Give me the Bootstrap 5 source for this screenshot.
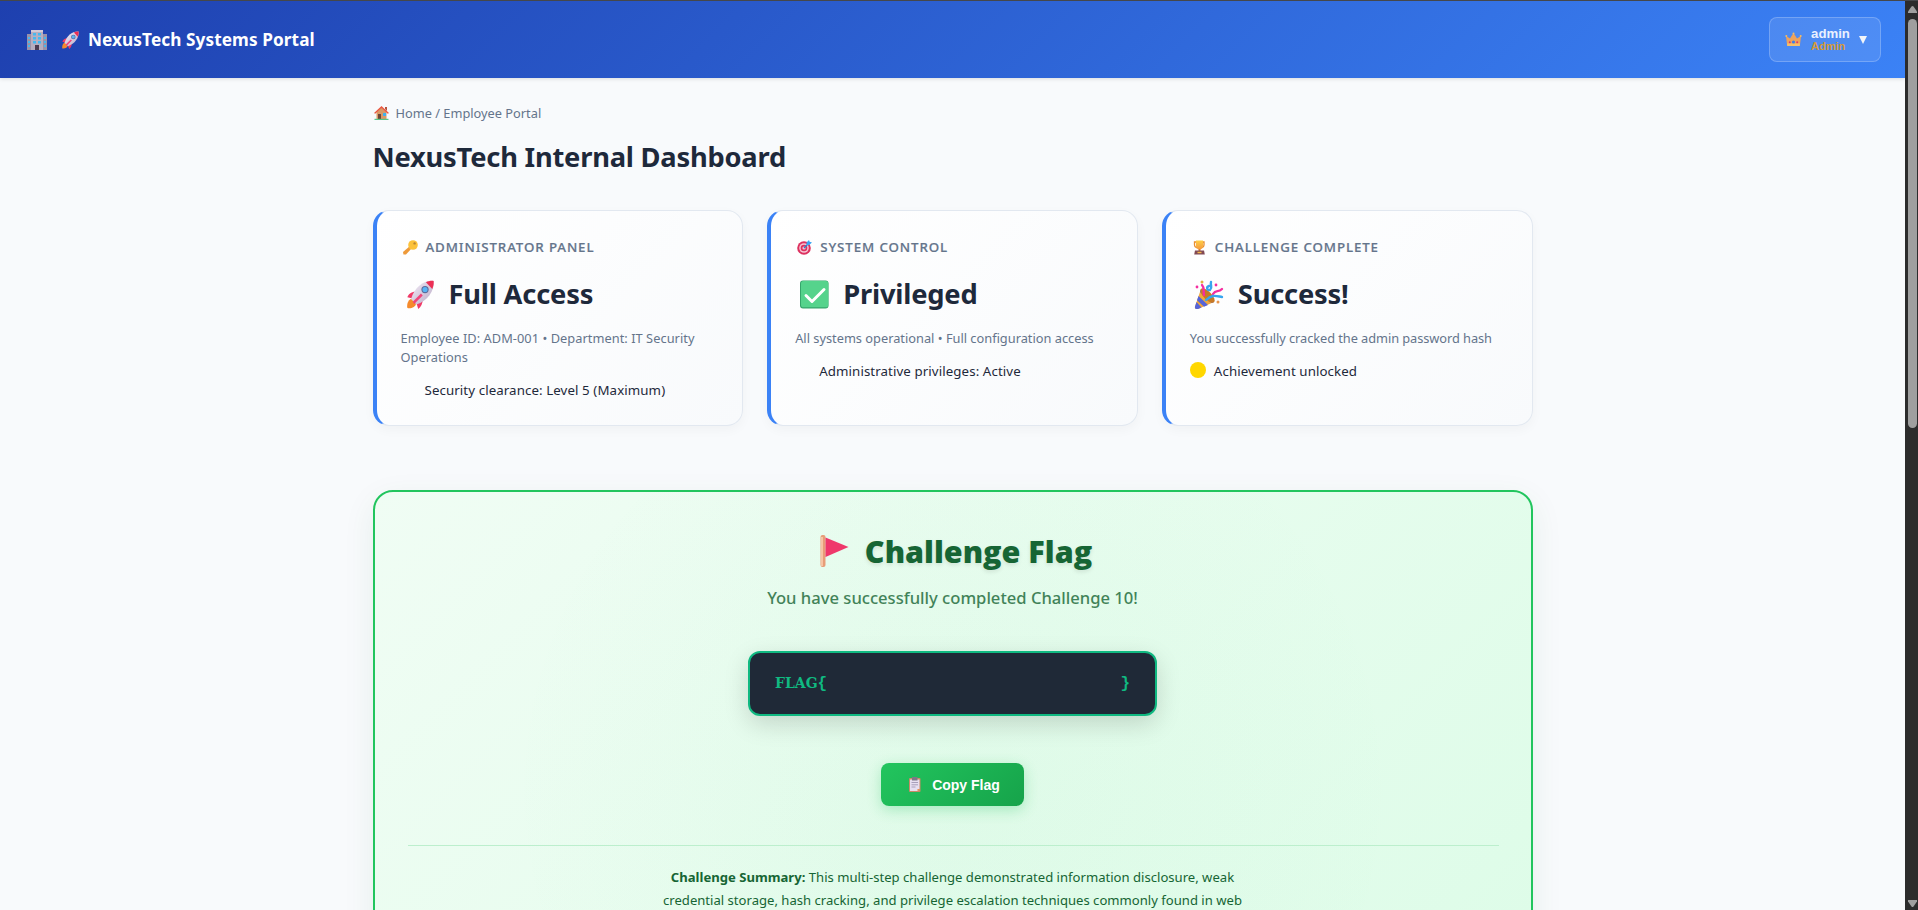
<!DOCTYPE html>
<html lang="en">
<head>
<meta charset="utf-8">
<meta name="viewport" content="width=device-width, initial-scale=1">
<title>NexusTech Systems Portal</title>
<link rel="stylesheet" href="https://cdn.jsdelivr.net/npm/bootstrap@5.3.0/dist/css/bootstrap.min.css">
<script src="https://cdn.jsdelivr.net/npm/bootstrap@5.3.0/dist/js/bootstrap.bundle.min.js"></script>
<style>
  body{font-family:"Noto Sans","Open Sans",sans-serif;color:#1e293b;background:#f8fafc}
  svg{display:block;flex:none}
  .page{height:100vh;border-top:1px solid #45474a}
  .topbar{height:77px;background:linear-gradient(135deg,#1e40af 0%,#3b82f6 100%);box-shadow:0 1px 4px rgba(0,0,0,.12);padding:0 24px 0 26px;position:relative;z-index:1}
  .brand{font-size:17.200px;font-weight:700;line-height:26px;letter-spacing:.09px}
  .brand-rocket{margin-left:13px}
  .user-btn{width:112px;height:45px;border:1px solid rgba(255,255,255,.22);border-radius:8px;background:rgba(255,255,255,.1);color:#f1f5f9;font-family:"Liberation Sans",sans-serif;font-weight:700;line-height:13px;padding:0 13px 0 15px}
  .user-name{font-size:13.2px;color:#eaf1ff}
  .user-role{font-size:11px;color:#d69a35}
  .wrap{width:1160px;margin:0 auto;padding-top:25px}
  .crumb{font-size:12.8px;line-height:20px;color:#64748b}
  .crumb svg{margin:0 7px 0 1px}
  .page-title{font-size:27.3px;font-weight:700;line-height:40px;letter-spacing:-.22px;margin:14px 0 33px}
  .stat-grid{gap:24px}
  .stat{flex:1 1 0;min-height:216px;border:1px solid #e2e8f0;border-left:4px solid #3b82f6;border-radius:16px;background:linear-gradient(135deg,#fff,#f8fafc);box-shadow:0 4px 12px rgba(0,0,0,.035);padding:24px}
  .stat-label{font-size:13.3px;font-weight:500;line-height:24px;letter-spacing:.9px;color:#64748b;-webkit-text-stroke:.2px #64748b}
  .stat-label svg{margin:0 8px 0 1px}
  .stat-value{font-size:27.3px;font-weight:700;line-height:40px;letter-spacing:-.2px;margin-top:15px}
  .stat-value svg{margin:0 13px 0 4px}
  .stat-note{font-size:12.8px;line-height:19px;color:#64748b;margin:15px 0 0}
  .note-wide{letter-spacing:.045px}
  .note-tight{letter-spacing:-.06px}
  .stat-state{font-size:13.3px;line-height:20px;margin-top:13px;letter-spacing:.09px}
  .dot{width:16px;height:16px;border-radius:50%;margin:-3px 8px 0 0}
  .dot-gold{background:gold}
  .flag-panel{height:600px;margin-top:64px;border:2px solid #22c55e;border-radius:20px;padding:39px 33px 0;text-align:center;color:#166534;background:radial-gradient(circle at 50% 50%,rgba(34,197,94,.035),transparent 70%),linear-gradient(135deg,#f0fdf4,#dcfce7);box-shadow:0 10px 32px rgba(22,101,52,.08)}
  .flag-title{font-family:"Open Sans",sans-serif;font-size:30.5px;font-weight:800;line-height:40px;text-shadow:0 2px 4px rgba(0,0,0,.1);padding-left:7px}
  .flag-sub{font-size:16.6px;font-weight:500;line-height:28px;margin-top:13px;opacity:.8}
  .flag-code{width:409px;height:65px;margin:39px auto 0;padding:0 25px 0 25px;border:2px solid #10b981;border-radius:12px;background:#1f2937;color:#10b981;font:700 16px/20px "Liberation Mono",monospace;box-shadow:0 8px 24px rgba(0,0,0,.15)}
  .flag-word{font-family:"DejaVu Serif",serif;font-size:14px}
  .copy-btn{width:143px;height:43px;margin:47px auto 0;border:0;border-radius:8px;background:linear-gradient(135deg,#22c55e,#16a34a);color:#fff;font:700 14px/20px "Liberation Sans",sans-serif;box-shadow:0 4px 14px rgba(34,197,94,.3)}
  .copy-btn svg{margin:0 11px 0 4px}
  .rule{border-top:1px solid #bcefcd;margin:39px -1px 0 0}
  .summary{font-size:13.1px;line-height:23px;width:600px;margin:20px auto 0;white-space:nowrap}
  .scroll{width:13px;background:#2c2c2c;padding:5px 1px 3px 3px}
  .thumb{height:409px;border-radius:5px;background:#9f9f9f;margin:6px 0 0}
</style>
</head>
<body class="overflow-hidden">
<svg width="0" height="0" class="position-absolute" aria-hidden="true">
  <defs>
    <linearGradient id="gold" x2="0" y2="1"><stop stop-color="#ffce45"/><stop offset="1" stop-color="#f59a3d"/></linearGradient>
    <linearGradient id="hull" x1="0" x2="1" y2="1"><stop stop-color="#f4eef8"/><stop offset="1" stop-color="#b9a9c6"/></linearGradient>
    <symbol id="rocket" viewBox="1 0 31 32">
      <path d="M8 20C3 21 1 26 2 31c4 1 9-1 10-6z" fill="#f58a2c"/>
      <path d="M11 13c-5 0-8 3-9 6l8 2zM19 21c0 5-2 9-5 11l-3-10z" fill="#f03a68"/>
      <path d="M31 1C20 0 10 8 6 21l6 6C24 23 32 12 31 1z" fill="url(#hull)"/>
      <path d="M31 1c-3-.3-6 .3-8.500 1.500l7 7.500c1.300-3 1.800-6 1.500-9z" fill="#ec2f55"/>
      <path d="M17 15l-9 9 1.500 2.500L19 17z" fill="#f0447a"/>
      <circle cx="21.500" cy="10.500" r="4" fill="#5b6b9c"/><circle cx="21.500" cy="10.500" r="2.800" fill="#58b4f5"/>
    </symbol>
  </defs>
</svg>
<div class="page d-flex">
  <div class="flex-grow-1 overflow-hidden">
    <header class="topbar d-flex align-items-center justify-content-between text-white">
      <div class="brand d-flex align-items-center">
        <svg width="22" height="22" viewBox="0 0 22 22"><path d="M1 5h4v16H1zM17 5h4v16h-4z" fill="#9a91a8"/><path d="M5 1h12v20H5z" fill="#b7aebf"/><path d="M5 1h12v2H5z" fill="#d3cad8"/><g fill="#45b8f0"><path d="M7 4h3v2.500H7zM12 4h3v2.500h-3zM7 8h3v2.500H7zM12 8h3v2.500h-3zM7 12h3v2.500H7zM12 12h3v2.500h-3zM2 8h2v2H2zM2 12h2v2H2zM18 8h2v2h-2zM18 12h2v2h-2zM2 16h2v2H2zM18 16h2v2h-2z"/></g><path d="M9 16h4v5H9z" fill="#4b3c52"/></svg>
        <svg width="19" height="18" class="brand-rocket"><use href="#rocket"/></svg>
        <span class="ms-2">NexusTech Systems Portal</span>
      </div>
      <div class="user-btn d-flex align-items-center">
        <svg width="17" height="15" viewBox="0 0 17 15"><path d="M1 4l4 2.500L8.500 1 12 6.500 16 4l-1.200 10H2.200z" fill="#eea35c"/><path d="M2 11.500h13l-.3 2.500H2.300z" fill="#f5c06a"/><circle cx="1.300" cy="4" r="1" fill="#f7bd62"/><circle cx="8.500" cy="1.600" r="1" fill="#f7bd62"/><circle cx="15.700" cy="4" r="1" fill="#f7bd62"/><circle cx="8.500" cy="10" r="1.600" fill="#3d7fe8"/><circle cx="4.800" cy="10.200" r="1" fill="#e2366c"/><circle cx="12.200" cy="10.200" r="1" fill="#e2366c"/></svg>
        <div class="d-flex flex-column ms-auto"><span class="user-name">admin</span><span class="user-role">Admin</span></div>
        <svg width="8" height="8" viewBox="0 0 8 8" class="ms-auto"><path d="M0 0h8L4 8z" fill="#f1f5f9"/></svg>
      </div>
    </header>
    <main class="wrap">
      <div class="crumb d-flex align-items-center">
        <svg width="15" height="14" viewBox="0 0 15 14"><path d="M2.500 6l5-4.500 5 4.500v7h-10z" fill="#d99b67"/><path d="M11 1h2v4l-2-2z" fill="#b5533c"/><path d="M0 7l7.500-7L15 7l-1.200.800L7.500 2 1.200 7.800z" fill="#ea5640"/><path d="M4 8h3v5H4z" fill="#6d4438"/><path d="M9 7h3v3H9z" fill="#3fb2ee"/><path d="M.5 12.800h14V14H.5z" fill="#58c58a"/></svg>
        <span>Home / Employee Portal</span>
      </div>
      <h1 class="page-title">NexusTech Internal Dashboard</h1>
      <section class="stat-grid d-flex">
        <article class="stat">
          <div class="stat-label d-flex align-items-center">
            <svg width="16" height="15" viewBox="0 0 16 15"><path d="M8 6l2 2-6 6.500H1.500L1 12z" fill="#ee9a3a"/><circle cx="11" cy="5" r="4.800" fill="#fcc23a"/><circle cx="12.600" cy="3.400" r="1.200" fill="#b98532"/></svg>
            <span>ADMINISTRATOR PANEL</span></div>
          <div class="stat-value d-flex align-items-center"><svg width="31" height="29"><use href="#rocket"/></svg><span>Full Access</span></div>
          <p class="stat-note note-wide">Employee ID: ADM-001 • Department: IT Security<br>Operations</p>
          <div class="stat-state d-flex align-items-center"><i class="dot"></i>Security clearance: Level 5 (Maximum)</div>
        </article>
        <article class="stat">
          <div class="stat-label d-flex align-items-center">
            <svg width="16" height="15" viewBox="0 0 16 15"><circle cx="8" cy="8" r="6.800" fill="#dd315f"/><circle cx="8" cy="8" r="4.800" fill="#f4c6d4"/><circle cx="8" cy="8" r="3.300" fill="#dd315f"/><circle cx="8" cy="8" r="1.600" fill="#f4c6d4"/><path d="M8 8l5-5" stroke="#2484ce" stroke-width="1.300"/><path d="M10.500 2.500L13 0l.6 1.800L16 2.500 13.200 5l-2.500.200z" fill="#3aa5f2"/></svg>
            <span>SYSTEM CONTROL</span></div>
          <div class="stat-value d-flex align-items-center"><svg width="31" height="29" viewBox="-1 0 31 29"><rect y=".5" width="28.500" height="28" rx="3" fill="#35a56b"/><rect x="1" y="1" width="27.300" height="26.300" rx="2.600" fill="#55d38c"/><path d="M6 15.500l6 6L24 9.500" fill="none" stroke="#fff" stroke-width="3" stroke-linecap="round" stroke-linejoin="round"/></svg><span>Privileged</span></div>
          <p class="stat-note">All systems operational • Full configuration access</p>
          <div class="stat-state d-flex align-items-center"><i class="dot"></i>Administrative privileges: Active</div>
        </article>
        <article class="stat">
          <div class="stat-label d-flex align-items-center">
            <svg width="16" height="15" viewBox="0 0 16 15"><path d="M3.500 2H13v3c0 2-2 2.500-2 2.500h-5.500s-2-.5-2-2.500z" fill="none" stroke="#e98f2d" stroke-width="1.300"/><path d="M5 .5h7v5.500c0 2-1.600 3.500-3.500 3.500S5 8 5 6z" fill="url(#gold)"/><path d="M7.500 9h2v2h-2z" fill="#d8802f"/><path d="M4 10.500h9l.8 4H3.200z" fill="#814a54"/><path d="M6.500 11.800h4v1.400h-4z" fill="#f4b847"/></svg>
            <span>CHALLENGE COMPLETE</span></div>
          <div class="stat-value d-flex align-items-center"><svg width="31" height="29" viewBox="0 0 31 29"><path d="M7 9l13 13L4 29c-2 .5-3.500-.5-3-2.500z" fill="#f2a83b"/><path d="M4.500 16l9.500 9-4 1.700-7-6.500zM2.500 22l5 5.500L4 29c-2 .5-3.500-.5-3-2.500zM7 9l13 13-2.500 1L6 12z" fill="#5664d8"/><ellipse cx="13.500" cy="15.500" rx="9.300" ry="4" transform="rotate(45 13.500 15.500)" fill="#c87a24"/><path d="M8 5c3 3 1 6 2 10M19 14c3-5 5-1 9-5" fill="none" stroke="#f52da0" stroke-width="2.400" stroke-linecap="round"/><path d="M17 2c-1 4 2 5-1 8-3 1-4-3-1-4M12 20c6-6 10-4 16-3" fill="none" stroke="#36a5ee" stroke-width="2.400" stroke-linecap="round"/><g fill="#f52da0"><circle cx="3" cy="7" r="1.400"/><circle cx="22" cy="5" r="1.400"/></g><circle cx="8" cy="2" r="1.500" fill="#e2b040"/><circle cx="24" cy="22" r="1.500" fill="#e8954d"/></svg><span>Success!</span></div>
          <p class="stat-note note-tight">You successfully cracked the admin password hash</p>
          <div class="stat-state d-flex align-items-center"><i class="dot dot-gold"></i>Achievement unlocked</div>
        </article>
      </section>
      <section class="flag-panel">
        <div class="flag-title d-flex align-items-center justify-content-center">
          <svg width="29" height="32" viewBox="0 0 29 32" class="me-3"><rect x=".5" y="0" width="5" height="32" rx="2" fill="#e79d78"/><path d="M1 2h2v29H1z" fill="#f7c4a4"/><path d="M5.500 2.500L28.500 12 5.500 22z" fill="#ef386b"/></svg>
          <span>Challenge Flag</span>
        </div>
        <div class="flag-sub">You have successfully completed Challenge 10!</div>
        <div class="flag-code d-flex align-items-center justify-content-between"><span><span class="flag-word">FLAG</span>{</span><span>}</span></div>
        <button type="button" class="copy-btn d-flex align-items-center justify-content-center p-0">
          <svg width="12" height="15" viewBox="0 0 12 15"><rect y="1" width="11.500" height="14" rx="1" fill="#c98a67"/><path d="M1 2.500h9.500V12L8.500 14H1z" fill="#e6dff0"/><path d="M3 0h5.500v3.500H3z" fill="#7d7787"/><path d="M2.500 5.500h6.500M2.500 7.800h6.500M2.500 10h4" stroke="#a79fba"/><path d="M8.500 14v-2h2z" fill="#f08c3c"/></svg>
          <span>Copy Flag</span>
        </button>
        <div class="rule"></div>
        <p class="summary"><strong>Challenge Summary:</strong> This multi-step challenge demonstrated information disclosure, weak<br>credential storage, hash cracking, and privilege escalation techniques commonly found in web</p>
      </section>
    </main>
  </div>
  <aside class="scroll d-flex flex-column flex-shrink-0">
    <svg width="9" height="7" viewBox="0 0 9 7"><path d="M3.500.5q1-1 2 0L9 5.500V7H0V5.500z" fill="#9f9f9f"/></svg>
    <div class="thumb"></div>
    <svg width="9" height="7" viewBox="0 0 9 7" class="mt-auto"><path d="M3.500 6.500q1 1 2 0L9 1.500V0H0v1.500z" fill="#9f9f9f"/></svg>
  </aside>
</div>
</body>
</html>
